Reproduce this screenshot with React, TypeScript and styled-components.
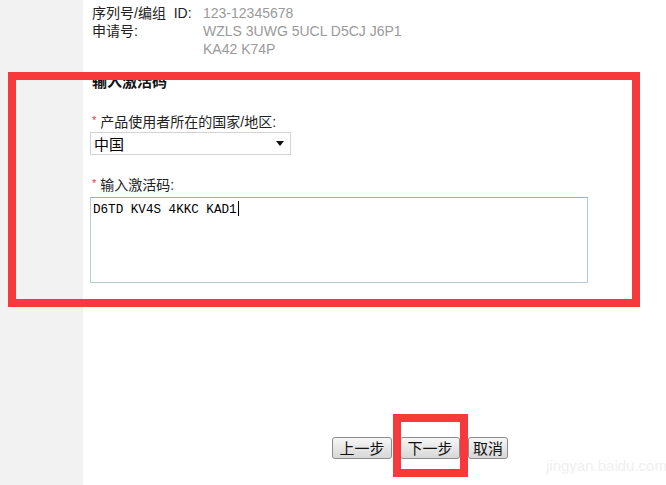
import React from "react";
import styled, { createGlobalStyle } from "styled-components";

const Global = createGlobalStyle`
  html, body { margin: 0; padding: 0; background: #ffffff; }
  body { font-family: "Liberation Sans", "Noto Sans CJK SC", sans-serif; }
`;

const Page = styled.div`
  position: relative;
  display: grid;
  grid-template-columns: 83px 1fr;
  min-height: 485px;
  overflow: hidden;
`;

const Sidebar = styled.aside`
  background: #f2f2f2;
`;

const Main = styled.main`
  display: flex;
  flex-direction: column;
  padding: 4px 0 0 9px;
  font-size: 14px;
  color: #333;
`;

const InfoGrid = styled.div`
  display: grid;
  grid-template-columns: 111px auto;
  line-height: 18px;
`;

const InfoLabel = styled.div`
  color: #222;
`;

const InfoValue = styled.div`
  color: #9a9a9a;
`;

const Heading = styled.h3`
  margin: 15px 0 0 0;
  font-size: 15px;
  line-height: 18px;
  font-weight: bold;
  color: #111;
`;

const FieldLabel = styled.label<{ $gap: number }>`
  display: block;
  margin-top: ${(p) => p.$gap}px;
  height: 18px;
  line-height: 18px;
  color: #222;
`;

const Required = styled.span`
  position: relative;
  top: -3px;
  color: #e23b3b;
  font-size: 11px;
  margin-right: 4px;
`;

const SelectBox = styled.div`
  box-sizing: border-box;
  display: flex;
  align-items: center;
  justify-content: space-between;
  width: 201px;
  height: 23px;
  margin: 1px 0 0 -2px;
  padding: 0 6px 0 3px;
  border: 1px solid #d4d4d4;
  background: #fff;
  color: #000;
  font-size: 15px;
`;

const Caret = styled.span`
  width: 0;
  height: 0;
  border-left: 4px solid transparent;
  border-right: 4px solid transparent;
  border-top: 5px solid #111;
`;

const CodeArea = styled.div`
  box-sizing: border-box;
  width: 498px;
  height: 86px;
  margin: 3px 0 0 -2px;
  padding: 3px 2px;
  border: 1px solid #b8c9dc;
  border-top-color: #98b0cc;
  background: #fff;
  font-family: "Liberation Mono", monospace;
  font-size: 12.6px;
  line-height: 16px;
  color: #000;
`;

const TextCaret = styled.span`
  display: inline-block;
  width: 1px;
  height: 15px;
  background: #000;
  vertical-align: -3px;
  margin-left: 1px;
`;

const ButtonRow = styled.div`
  display: flex;
  gap: 8px;
  margin-top: 154px;
  padding-left: 240px;
`;

const Button = styled.button<{ $w: number }>`
  box-sizing: border-box;
  width: ${(p) => p.$w}px;
  height: 22px;
  padding: 0;
  border: 1px solid #8c8c8c;
  border-radius: 3px;
  background: linear-gradient(#f7f7f7, #e6e6e6 50%, #d8d8d8);
  font-family: "Noto Sans CJK SC", sans-serif;
  font-size: 15px;
  line-height: 20px;
  color: #111;
`;

const Annotation = styled.div<{ $l: number; $t: number; $w: number; $h: number }>`
  position: absolute;
  box-sizing: border-box;
  left: ${(p) => p.$l}px;
  top: ${(p) => p.$t}px;
  width: ${(p) => p.$w}px;
  height: ${(p) => p.$h}px;
  border: 8px solid #f8393b;
  pointer-events: none;
`;

const Watermark = styled.div`
  position: absolute;
  left: 546px;
  top: 457px;
  font-family: "Liberation Sans", sans-serif;
  font-size: 15px;
  color: #f0f0f0;
  white-space: nowrap;
`;

export default function App() {
  return (
    <>
      <Global />
      <Page>
        <Sidebar />
        <Main>
          <InfoGrid>
            <InfoLabel>序列号/编组&nbsp; ID:</InfoLabel>
            <InfoValue>123-12345678</InfoValue>
            <InfoLabel>申请号:</InfoLabel>
            <InfoValue>
              WZLS 3UWG 5UCL D5CJ J6P1
              <br />
              KA42 K74P
            </InfoValue>
          </InfoGrid>
          <Heading>输入激活码</Heading>
          <FieldLabel $gap={22}>
            <Required>*</Required>产品使用者所在的国家/地区:
          </FieldLabel>
          <SelectBox>
            <span>中国</span>
            <Caret />
          </SelectBox>
          <FieldLabel $gap={21}>
            <Required>*</Required>输入激活码:
          </FieldLabel>
          <CodeArea>
            D6TD KV4S 4KKC KAD1
            <TextCaret />
          </CodeArea>
          <ButtonRow>
            <Button $w={60}>上一步</Button>
            <Button $w={60}>下一步</Button>
            <Button $w={40}>取消</Button>
          </ButtonRow>
        </Main>
        <Annotation $l={8} $t={72} $w={632} $h={235} />
        <Annotation $l={393} $t={414} $w={75} $h={63} />
        <Watermark>jingyan.baidu.com</Watermark>
      </Page>
    </>
  );
}
